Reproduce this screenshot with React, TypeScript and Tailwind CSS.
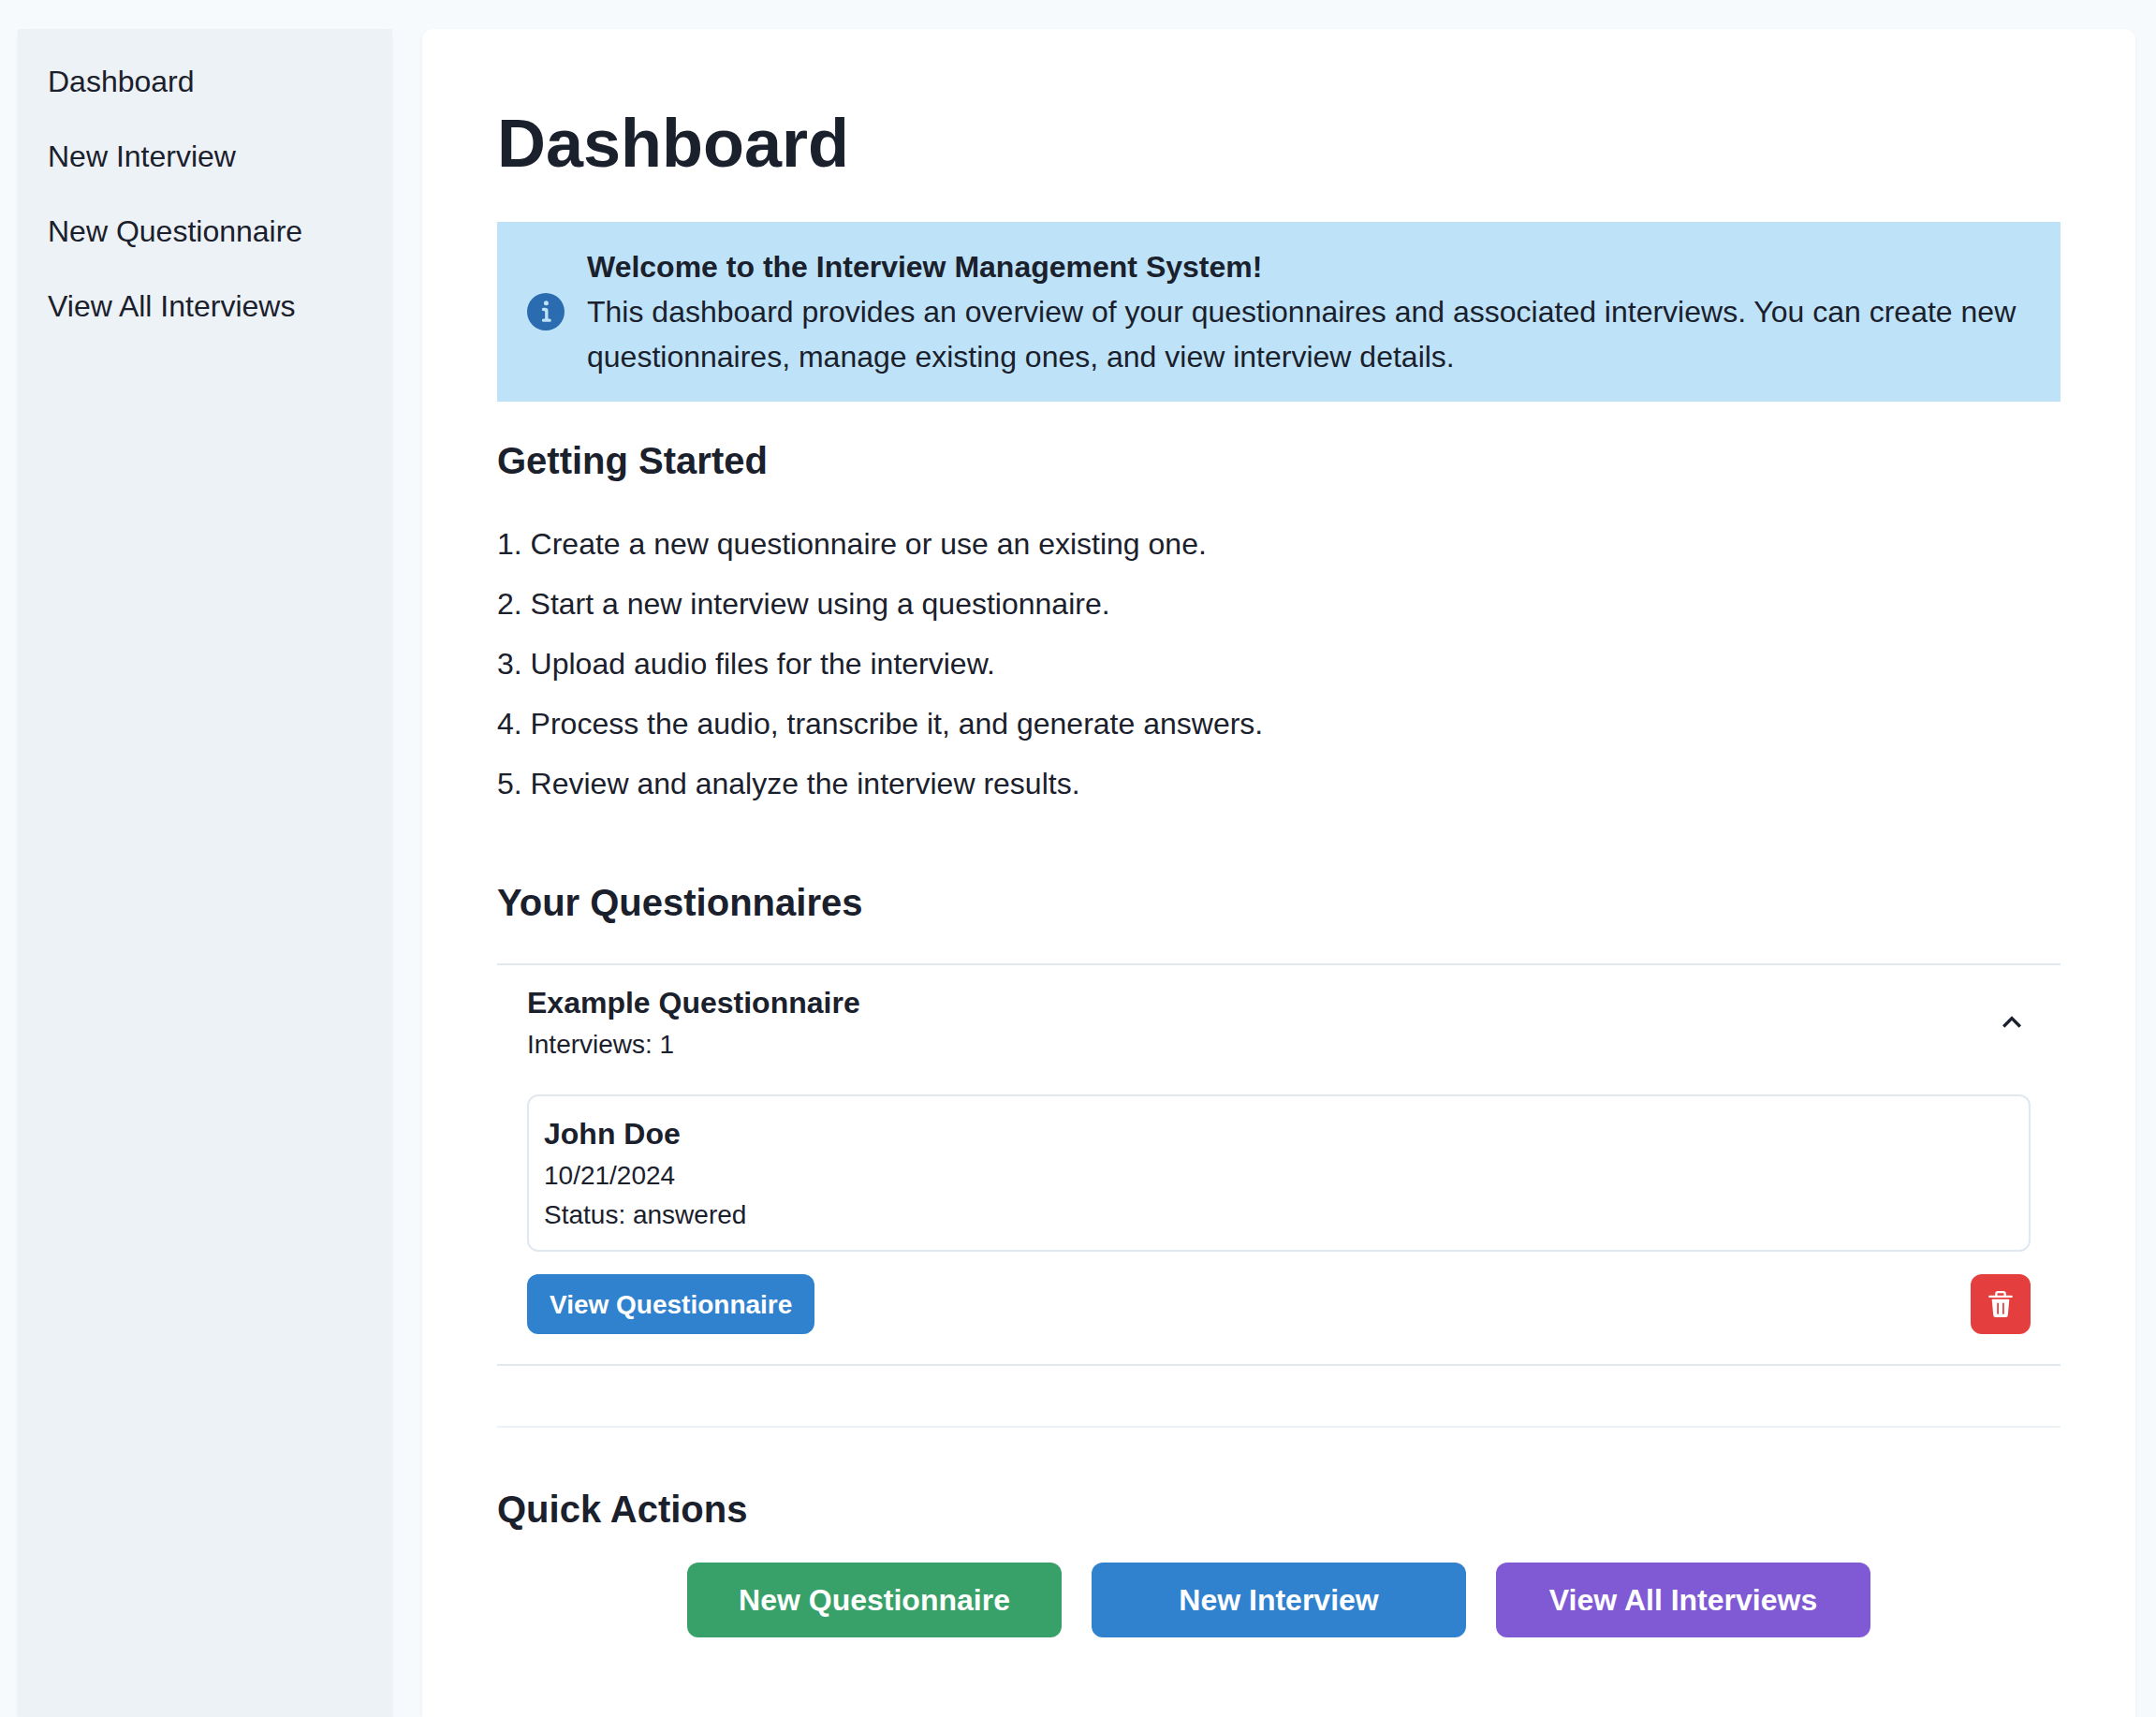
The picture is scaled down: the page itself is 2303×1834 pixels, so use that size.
import { useState } from "react";

const navItems = ["Dashboard", "New Interview", "New Questionnaire", "View All Interviews"];

const steps = [
  "1. Create a new questionnaire or use an existing one.",
  "2. Start a new interview using a questionnaire.",
  "3. Upload audio files for the interview.",
  "4. Process the audio, transcribe it, and generate answers.",
  "5. Review and analyze the interview results.",
];

const actions = [
  { label: "New Questionnaire", color: "bg-[#38a169]" },
  { label: "New Interview", color: "bg-[#3182ce]" },
  { label: "View All Interviews", color: "bg-[#805ad5]" },
];

function InfoIcon() {
  return (
    <svg viewBox="0 0 24 24" className="size-10 shrink-0 text-[#2b6cb0]" aria-hidden="true">
      <path
        fill="currentColor"
        d="M12,0A12,12,0,1,0,24,12,12.013,12.013,0,0,0,12,0Zm.25,5a1.5,1.5,0,1,1-1.5,1.5A1.5,1.5,0,0,1,12.25,5ZM14.5,18.5h-4a1,1,0,0,1,0-2h.75a.25.25,0,0,0,.25-.25v-4.5a.25.25,0,0,0-.25-.25H10.5a1,1,0,0,1,0-2h1a2,2,0,0,1,2,2v4.75a.25.25,0,0,0,.25.25h.75a1,1,0,1,1,0,2Z"
      />
    </svg>
  );
}

function ChevronIcon({ open }: { open: boolean }) {
  return (
    <svg viewBox="0 0 24 24" className={open ? "size-10 shrink-0 rotate-180" : "size-10 shrink-0"} aria-hidden="true">
      <path fill="currentColor" d="M16.59 8.59L12 13.17 7.41 8.59 6 10l6 6 6-6z" />
    </svg>
  );
}

function TrashIcon() {
  return (
    <svg viewBox="0 0 24 24" className="size-7" aria-hidden="true">
      <path
        fill="currentColor"
        d="M19.452 7.5H4.547a.5.5 0 00-.5.545l1.287 14.136A2 2 0 007.326 24h9.347a2 2 0 001.992-1.819L19.95 8.045a.5.5 0 00-.129-.382.5.5 0 00-.369-.163zm-9.2 13a.75.75 0 01-1.5 0v-9a.75.75 0 011.5 0zm5 0a.75.75 0 01-1.5 0v-9a.75.75 0 011.5 0zM22 4h-4.75a.25.25 0 01-.25-.25V2.5A2.5 2.5 0 0014.5 0h-5A2.5 2.5 0 007 2.5v1.25a.25.25 0 01-.25.25H2a1 1 0 000 2h20a1 1 0 000-2zM9 3.75V2.5a.5.5 0 01.5-.5h5a.5.5 0 01.5.5v1.25a.25.25 0 01-.25.25h-5.5A.25.25 0 019 3.75z"
      />
    </svg>
  );
}

function QuestionnaireItem() {
  const [open, setOpen] = useState(true);
  return (
    <div className="mt-10 border-y-2 border-[#e2e8f0]">
      <button
        type="button"
        aria-expanded={open}
        onClick={() => setOpen(!open)}
        className="flex w-full items-center justify-between px-8 py-4 text-left"
      >
        <span className="flex flex-col">
          <span className="font-bold">Example Questionnaire</span>
          <span className="text-[28px] leading-[42px]">Interviews: 1</span>
        </span>
        <ChevronIcon open={open} />
      </button>
      {open && (
        <div className="flex flex-col gap-6 px-8 pt-4 pb-8">
          <div className="rounded-xl border-2 border-[#e2e8f0] p-4">
            <p className="font-bold">John Doe</p>
            <p className="text-[28px] leading-[42px]">10/21/2024</p>
            <p className="text-[28px] leading-[42px]">Status: answered</p>
          </div>
          <div className="flex items-center justify-between">
            <button type="button" className="h-16 rounded-xl bg-[#3182ce] px-6 text-[28px] leading-[35px] font-bold text-white">
              View Questionnaire
            </button>
            <button
              type="button"
              aria-label="Delete questionnaire"
              className="flex size-16 items-center justify-center rounded-xl bg-[#e53e3e] text-white"
            >
              <TrashIcon />
            </button>
          </div>
        </div>
      )}
    </div>
  );
}

export default function App() {
  return (
    <div className="flex min-h-screen gap-8 bg-[#f7fafc] pt-[31px] pr-[22px] pl-[19px] font-['Liberation_Sans',Arial,sans-serif] text-[32px] leading-[48px] text-[#1a202c]">
      <aside className="flex w-[400px] shrink-0 flex-col rounded-t-xl shadow-[0_2px_4px_0_rgba(0,0,0,0.05)]">
        <nav className="flex grow flex-col items-start gap-8 bg-[#edf2f7] p-8">
          {navItems.map((item) => (
            <a key={item} href="#">
              {item}
            </a>
          ))}
        </nav>
      </aside>

      <main className="min-w-0 grow rounded-t-xl bg-white p-20 shadow-[0_2px_4px_0_rgba(0,0,0,0.05)]">
        <h1 className="pb-0.5 text-[72px] leading-[84px] font-bold">Dashboard</h1>

        <div role="status" className="mt-10 flex items-center gap-6 bg-[#bee3f8] px-8 py-6">
          <InfoIcon />
          <div>
            <p className="font-bold">Welcome to the Interview Management System!</p>
            <p>
              This dashboard provides an overview of your questionnaires and associated interviews. You can create new
              questionnaires, manage existing ones, and view interview details.
            </p>
          </div>
        </div>

        <section>
          <h2 className="mt-10 pb-0.5 text-[40px] leading-[46px] font-bold">Getting Started</h2>
          <ol className="mt-10 flex flex-col gap-4">
            {steps.map((step) => (
              <li key={step}>{step}</li>
            ))}
          </ol>
        </section>

        <section>
          <h2 className="mt-20 pb-0.5 text-[40px] leading-[46px] font-bold">Your Questionnaires</h2>
          <QuestionnaireItem />
        </section>

        <hr className="my-16 border-t-2 border-[#edf2f7]" />

        <section>
          <h2 className="pb-0.5 text-[40px] leading-[46px] font-bold">Quick Actions</h2>
          <div className="mt-8 flex flex-wrap justify-center gap-8">
            {actions.map(({ label, color }) => (
              <button key={label} type="button" className={`h-20 w-[400px] rounded-xl font-bold text-white ${color}`}>
                {label}
              </button>
            ))}
          </div>
        </section>
      </main>
    </div>
  );
}
